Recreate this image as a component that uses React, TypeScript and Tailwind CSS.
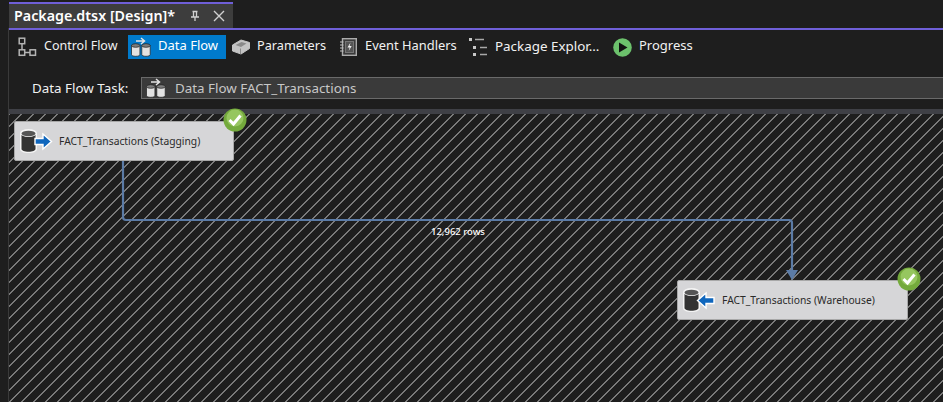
import type { ReactNode } from "react";

const uiFont = "font-['Noto_Sans',sans-serif]";

function ControlFlowIcon() {
  return (
    <svg width="19" height="20" viewBox="0 0 19 20" fill="none" stroke="#b4b4b4" strokeWidth="1.5">
      <rect x="1.2" y="1.2" width="5.5" height="5.5" />
      <rect x="1.2" y="12.8" width="5.5" height="5.5" />
      <rect x="12" y="12.8" width="5.5" height="5.5" />
      <path d="M4 7v6M7 15.500h5" />
    </svg>
  );
}

function DataFlowIcon() {
  return (
    <svg width="20" height="20" viewBox="0 0 20 20" fill="none">
      <path d="M5 4h8M10 1l3.500 3L10 7" stroke="#e4e4e4" strokeWidth="1.500" />
      <path d="M.5 8.500v9c0 1 1.500 1.800 4.200 1.800s4.200-.8 4.200-1.800v-9z" fill="#e2e2e2" stroke="#1f1f1f" strokeWidth=".7" />
      <ellipse cx="4.700" cy="8.500" rx="4.200" ry="1.800" fill="#7c7c7c" stroke="#1f1f1f" strokeWidth=".7" />
      <path d="M10.800 8.500v9c0 1 1.500 1.800 4.200 1.800s4.200-.8 4.200-1.800v-9z" fill="#e2e2e2" stroke="#1f1f1f" strokeWidth=".7" />
      <ellipse cx="15" cy="8.500" rx="4.200" ry="1.800" fill="#7c7c7c" stroke="#1f1f1f" strokeWidth=".7" />
    </svg>
  );
}

function ParametersIcon() {
  return (
    <svg width="18" height="16" viewBox="0 0 18 16">
      <path d="M.5 6 9 1l8.500 2.500v6L9 15l-8.500-3z" fill="#c4c4c4" stroke="#c4c4c4" strokeLinejoin="round" />
      <path d="M3.500 6 9.500 3l5 1.500L9 8z" fill="#8a8a8a" />
      <path d="M8.500 9.500V15" stroke="#8a8a8a" />
    </svg>
  );
}

function EventHandlersIcon() {
  return (
    <svg width="17" height="18" viewBox="0 0 17 18" fill="none">
      <rect x="2.500" y=".7" width="13.800" height="16.600" fill="#3a3a3a" stroke="#ababab" strokeWidth="1.400" />
      <rect x="5.500" y="3.500" width="8" height="11" fill="#555" stroke="#777" />
      <path d="M10.500 4.500 7.500 9.500h2.200l-1 3.500 3-5H9.600z" fill="#f0f0f0" />
      <path d="M0 4h3.500M0 7h3.500M0 10h3.500M0 13h3.500" stroke="#c0c0c0" />
    </svg>
  );
}

function PackageExplorerIcon() {
  return (
    <svg width="19" height="19" viewBox="0 0 19 19" fill="none">
      <rect x="0" y="0" width="3" height="3" fill="#c8c8c8" />
      <rect x="4" y="8" width="3" height="3" fill="#c8c8c8" />
      <rect x="4" y="15" width="3" height="3" fill="#c8c8c8" />
      <path d="M6 1.500h9M11 9.500h7M11 16.500h7" stroke="#a8a8a8" strokeWidth="1.300" />
    </svg>
  );
}

function ProgressIcon() {
  return (
    <svg width="19" height="19" viewBox="0 0 19 19">
      <circle cx="9.500" cy="9.500" r="9.300" fill="#6cc16c" />
      <path d="M6 4.500 14.500 9.500 6 14.500z" fill="#111" />
    </svg>
  );
}

function ToolButton({ icon, label, active, className, textClass }: { icon: ReactNode; label: string; active?: boolean; className: string; textClass: string }) {
  return (
    <div className={`flex h-6 shrink-0 items-center ${active ? "bg-[#007acc] text-white" : "text-[#f1f1f1]"} ${className}`}>
      {icon}
      <span className={`whitespace-nowrap pb-[2px] ${textClass}`}>{label}</span>
    </div>
  );
}

function DatabaseArrowIcon({ incoming }: { incoming?: boolean }) {
  return (
    <svg width="34" height="26" viewBox="0 0 34 26">
      <path d="M1 5v16c0 2.500 3.500 4 8.500 4s8.500-1.500 8.500-4V5z" fill="#f4f4f4" />
      <path d="M2.500 6v15c0 1.600 3 2.800 7 2.800s7-1.200 7-2.800V6z" fill="#333" />
      <ellipse cx="9.500" cy="5" rx="8.500" ry="4" fill="#f4f4f4" />
      <ellipse cx="9.500" cy="5.500" rx="7" ry="2.800" fill="#555" />
      {incoming ? (
        <path d="M32 10.500h-8V6l-8.500 7.500L24 21v-4.500h8z" fill="#0f66bd" stroke="#fff" strokeWidth="1.400" />
      ) : (
        <path d="M16 10.500h8V6l8.500 7.500L24 21v-4.500h-8z" fill="#0f66bd" stroke="#fff" strokeWidth="1.400" />
      )}
    </svg>
  );
}

function CheckBadge() {
  return (
    <svg width="24" height="24" viewBox="0 0 24 24" className="absolute -right-[14px] -top-[14px]">
      <circle cx="12" cy="12" r="11.500" fill="#74aa3c" />
      <circle cx="12" cy="10" r="8.500" fill="#96c65f" />
      <path d="m6.500 12 4 4 7-8.500" fill="none" stroke="#fff" strokeWidth="3" />
    </svg>
  );
}

function TaskNode({ label, incoming, className }: { label: string; incoming?: boolean; className: string }) {
  return (
    <div className={`absolute flex h-[40px] items-center rounded-[2px] border border-[#a8a8a8] bg-[#d6d6d8] ${className}`}>
      <div className="ml-[4px]">
        <DatabaseArrowIcon incoming={incoming} />
      </div>
      <span className={`ml-[6px] whitespace-nowrap pt-[2px] text-[10.300px] text-[#2a2a2a] ${uiFont}`}>{label}</span>
      <CheckBadge />
    </div>
  );
}

export default function App() {
  return (
    <div className={`flex h-[402px] w-[943px] flex-col overflow-hidden bg-[#1e1e1e] ${uiFont}`}>
      <div className="ml-[9px] flex h-[28px] shrink-0 items-end">
        <div className="mt-[2px] flex h-[26px] w-[224px] items-center border-t-2 border-[#6f5fd8] bg-[#3d3d3d] pl-[5px] text-white">
          <span className="whitespace-nowrap text-[14.300px] font-semibold">Package.dtsx [Design]*</span>
          <svg width="12" height="12" viewBox="0 0 12 12" className="ml-[14px]" fill="none" stroke="#d0d0d0" strokeWidth="1.300">
            <path d="M3.500 1.500h5M4.500 1.500v5.500M7.500 1.500v5.500M2 7h8M6 7v4" />
          </svg>
          <svg width="12" height="12" viewBox="0 0 12 12" className="ml-[12px]" fill="none" stroke="#d0d0d0" strokeWidth="1.400">
            <path d="m1 1 10 10M11 1 1 11" />
          </svg>
        </div>
      </div>
      <div className="ml-[8px] flex min-h-0 flex-1 flex-col border-l border-[#3a3a3a]">
        <div className="h-[2px] shrink-0 bg-[#6f5fd8]" />
        <div className="flex h-[29px] shrink-0 items-end pl-[9px]">
          <ToolButton icon={<ControlFlowIcon />} label="Control Flow" textClass="text-[12.500px]" className="w-[110px] gap-[7px]" />
          <ToolButton icon={<DataFlowIcon />} label="Data Flow" active textClass="text-[13px]" className="w-[98px] gap-[7px] pl-[3px]" />
          <ToolButton icon={<ParametersIcon />} label="Parameters" textClass="text-[12.700px]" className="ml-[6px] w-[108px] gap-[7px]" />
          <ToolButton icon={<EventHandlersIcon />} label="Event Handlers" textClass="text-[12.900px]" className="w-[129px] gap-[8px]" />
          <ToolButton icon={<PackageExplorerIcon />} label="Package Explor..." textClass="text-[13.400px]" className="w-[144px] gap-[7px]" />
          <ToolButton icon={<ProgressIcon />} label="Progress" textClass="text-[13px]" className="gap-[7px]" />
        </div>
        <div className="mt-[18px] flex h-[22px] shrink-0 items-center pl-[23px]">
          <span className="w-[109px] whitespace-nowrap text-[13.400px] text-[#f1f1f1]">Data Flow Task:</span>
          <div className="flex h-[22px] flex-1 items-center gap-[9px] border border-r-0 border-[#6a6a6a] bg-[#3a3a3a] pl-[4px]">
            <DataFlowIcon />
            <span className="whitespace-nowrap pt-[1px] text-[13.400px] text-[#c8c8c8]">Data Flow FACT_Transactions</span>
          </div>
        </div>
        <div className="mt-[10px] h-[5px] shrink-0 bg-[#3f4046]" />
        <div className="relative min-h-0 flex-1 bg-[#1e1e1e] bg-[repeating-linear-gradient(135deg,#7a7a7a_0,#7a7a7a_0.8px,#1e1e1e_0.8px,#1e1e1e_8.485px)]">
          <svg width="934" height="288" className="absolute left-0 top-0" fill="none">
            <path d="M114 46V103a3 3 0 0 0 3 3H780a3 3 0 0 1 3 3V160" stroke="#5b7ba6" strokeWidth="2.200" />
            <path d="M777 156h12l-6 10z" fill="#5b7ba6" />
          </svg>
          <span className="absolute left-[422px] top-[111px] whitespace-nowrap text-[9.500px] font-medium text-white">12,962 rows</span>
          <TaskNode label="FACT_Transactions (Stagging)" className="left-[5px] top-[7px] w-[220px]" />
          <TaskNode label="FACT_Transactions (Warehouse)" incoming className="left-[668px] top-[166px] w-[231px]" />
        </div>
      </div>
    </div>
  );
}
